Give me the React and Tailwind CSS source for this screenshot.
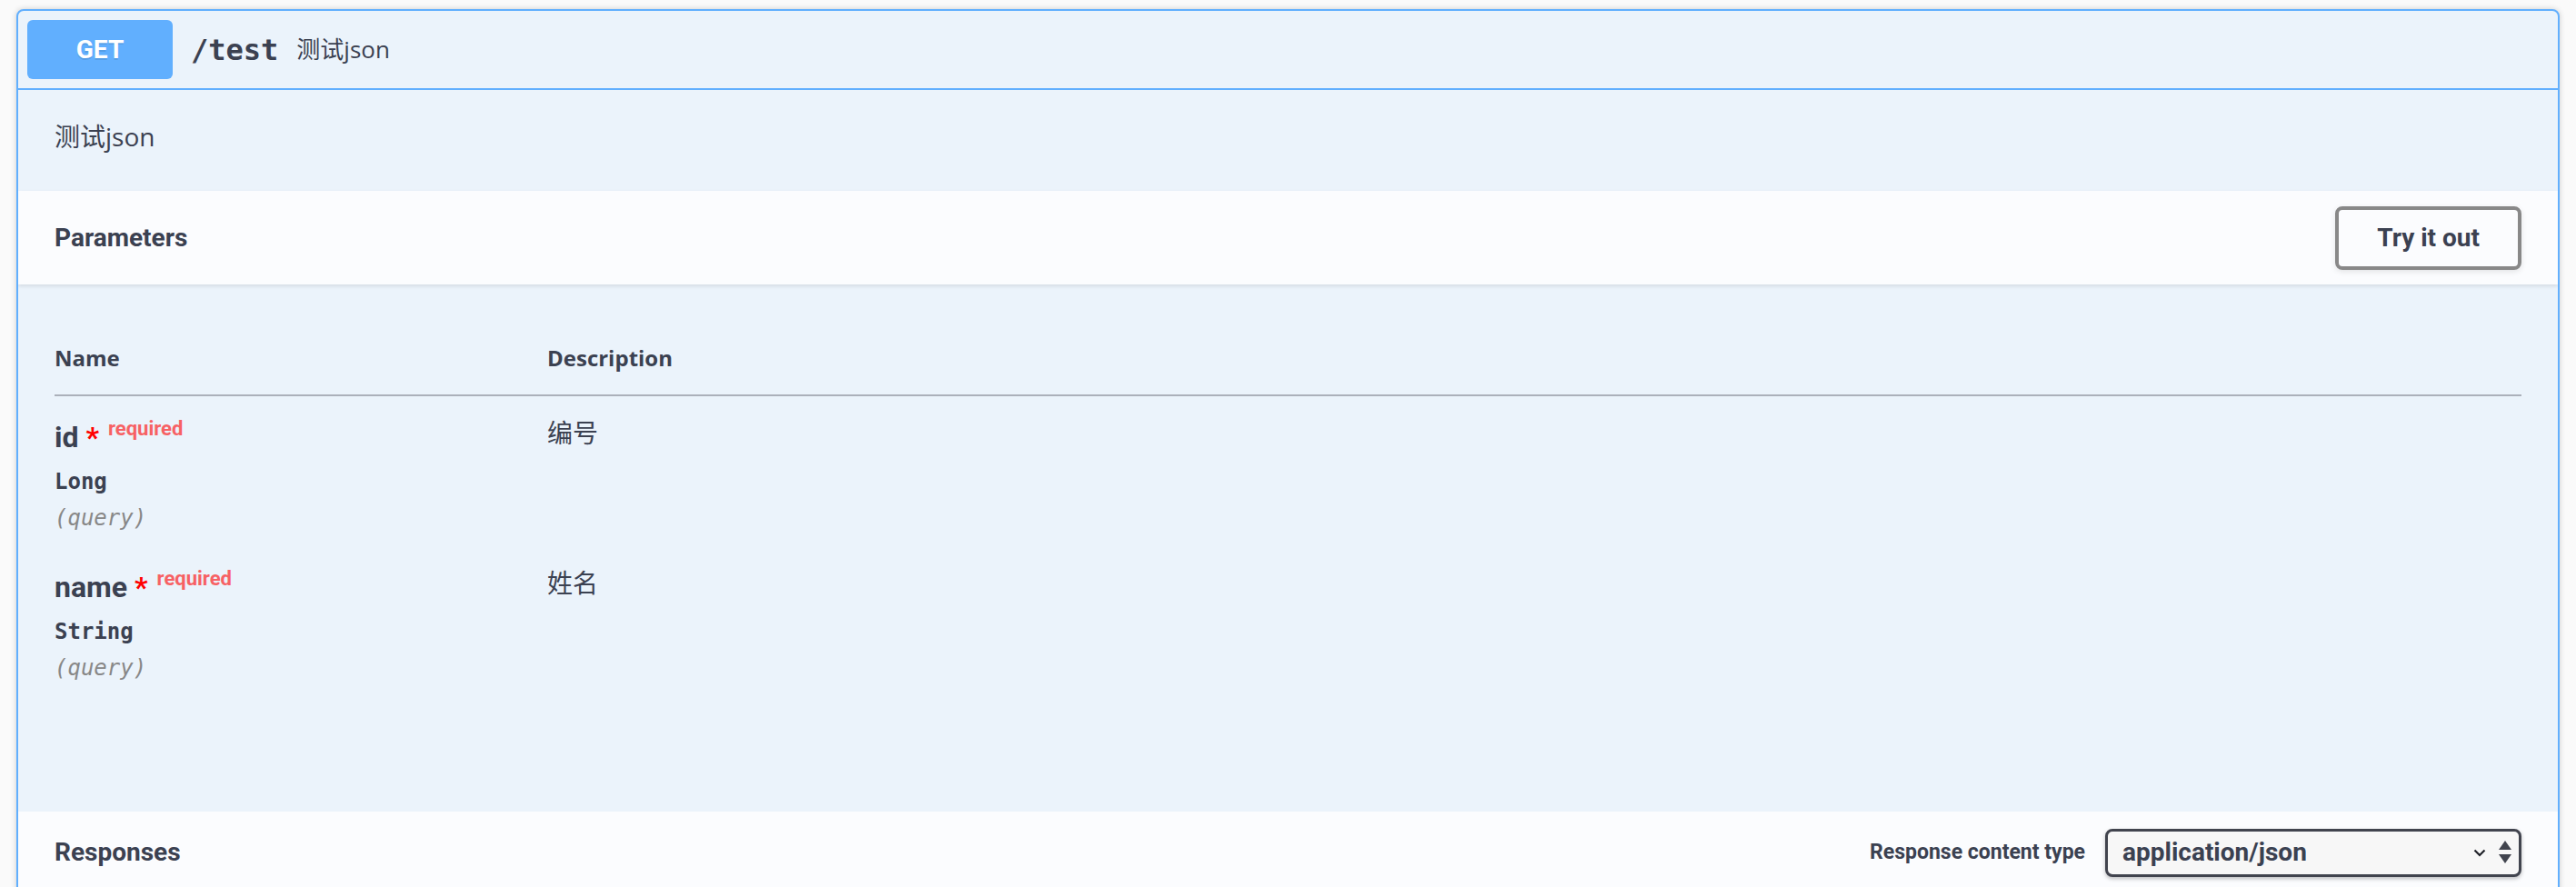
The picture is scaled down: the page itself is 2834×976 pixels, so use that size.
import React from "react";

const sans = "font-['Roboto','Noto_Sans_CJK_SC',sans-serif]";
const body = "font-['Open_Sans','Noto_Sans_CJK_SC',sans-serif]";
const mono = "font-['DejaVu_Sans_Mono','Liberation_Mono',monospace]";

const params = [
  { name: "id", type: "Long", desc: "编号" },
  { name: "name", type: "String", desc: "姓名" },
];

const SelectArrows = () => (
  <div className="flex items-center gap-[14px]">
    <svg width="14" height="9" viewBox="0 0 14 9">
      <path d="M1.5 1.5 L7 7 L12.5 1.5" fill="none" stroke="#1f2128" strokeWidth="2.2" />
    </svg>
    <svg width="14" height="26" viewBox="0 0 14 26">
      <polygon points="7,0 14,10 0,10" fill="#41444e" />
      <polygon points="0,15 14,15 7,25" fill="#41444e" />
    </svg>
  </div>
);

const ParamRow = ({ p }) => (
  <tr>
    <td className="pt-[20px] pb-[15px] align-top w-[542px]">
      <div className={`${sans} text-[32px] font-bold leading-[50px] text-[#3b4151]`}>
        {p.name}
        <span className="text-[#ff0000]">&nbsp;*</span>
        <span className="relative top-[-13px] pl-[10px] text-[22px] font-bold text-[#f76164]">required</span>
      </div>
      <div className={`${mono} pt-[4px] text-[24px] font-semibold leading-[32px] text-[#3b4151]`}>{p.type}</div>
      <div className={`${mono} mt-[8px] text-[24px] italic leading-[32px] text-[#888]`}>(query)</div>
    </td>
    <td className={`${body} pt-[20px] pb-[15px] align-top text-[28px] leading-[40px] text-[#3b4151]`}>{p.desc}</td>
  </tr>
);

export default function App() {
  return (
    <div className="min-h-screen bg-[#fafafa] px-[18px] pt-[10px]">
      <div className="rounded-[8px] border-2 border-[#61affe] bg-[#ebf3fb] shadow-[0_0_6px_rgba(0,0,0,0.19)] overflow-hidden">
        {/* summary */}
        <div className="flex items-center border-b-2 border-[#61affe] p-[10px]">
          <div className={`${sans} flex h-[65px] w-[160px] items-center justify-center rounded-[6px] bg-[#61affe] text-[28px] font-bold text-white [text-shadow:0_2px_0_rgba(0,0,0,0.1)]`}>
            GET
          </div>
          <span className={`${mono} px-[20px] text-[32px] font-semibold text-[#3b4151]`}>/test</span>
          <span className={`${body} text-[26px] text-[#3b4151]`}>测试json</span>
        </div>

        {/* description */}
        <div className={`${body} px-[40px] pt-[31px] pb-[40px] text-[28px] leading-[40px] text-[#3b4151]`}>测试json</div>

        {/* parameters header */}
        <div className="flex h-[103px] items-center justify-between bg-[#fbfcfe] px-[40px] shadow-[0_2px_4px_rgba(0,0,0,0.1)]">
          <h4 className={`${sans} text-[28px] font-bold text-[#3b4151]`}>Parameters</h4>
          <button className={`${sans} h-[70px] rounded-[8px] border-4 border-[#888] bg-transparent px-[42px] text-[28px] font-bold text-[#3b4151] shadow-[0_2px_6px_rgba(0,0,0,0.1)]`}>
            Try it out
          </button>
        </div>

        {/* parameters table */}
        <div className="px-[40px] pt-[42px] pb-[127px]">
          <table className="w-full border-collapse">
            <thead>
              <tr className="border-b-2 border-[#abb0ba]">
                <th className={`${body} pt-[24px] pb-[25px] text-left text-[24px] font-bold leading-[30px] text-[#3b4151]`}>Name</th>
                <th className={`${body} pt-[24px] pb-[25px] text-left text-[24px] font-bold leading-[30px] text-[#3b4151]`}>Description</th>
              </tr>
            </thead>
            <tbody>
              {params.map((p) => (
                <ParamRow key={p.name} p={p} />
              ))}
            </tbody>
          </table>
        </div>

        {/* responses header */}
        <div className="flex h-[90px] items-center justify-between bg-[#fbfcfe] px-[40px]">
          <h4 className={`${sans} text-[28px] font-bold text-[#3b4151]`}>Responses</h4>
          <div className="flex items-center gap-[22px]">
            <span className={`${sans} text-[23px] font-bold text-[#3b4151]`}>Response content type</span>
            <div className={`${sans} flex h-[53px] w-[458px] items-center justify-between rounded-[8px] border-[3px] border-[#41444e] bg-[#f7f7f7] pl-[16px] pr-[8px] text-[28px] font-bold text-[#3b4151] shadow-[0_2px_4px_rgba(0,0,0,0.25)]`}>
              <span>application/json</span>
              <SelectArrows />
            </div>
          </div>
        </div>
      </div>
    </div>
  );
}
